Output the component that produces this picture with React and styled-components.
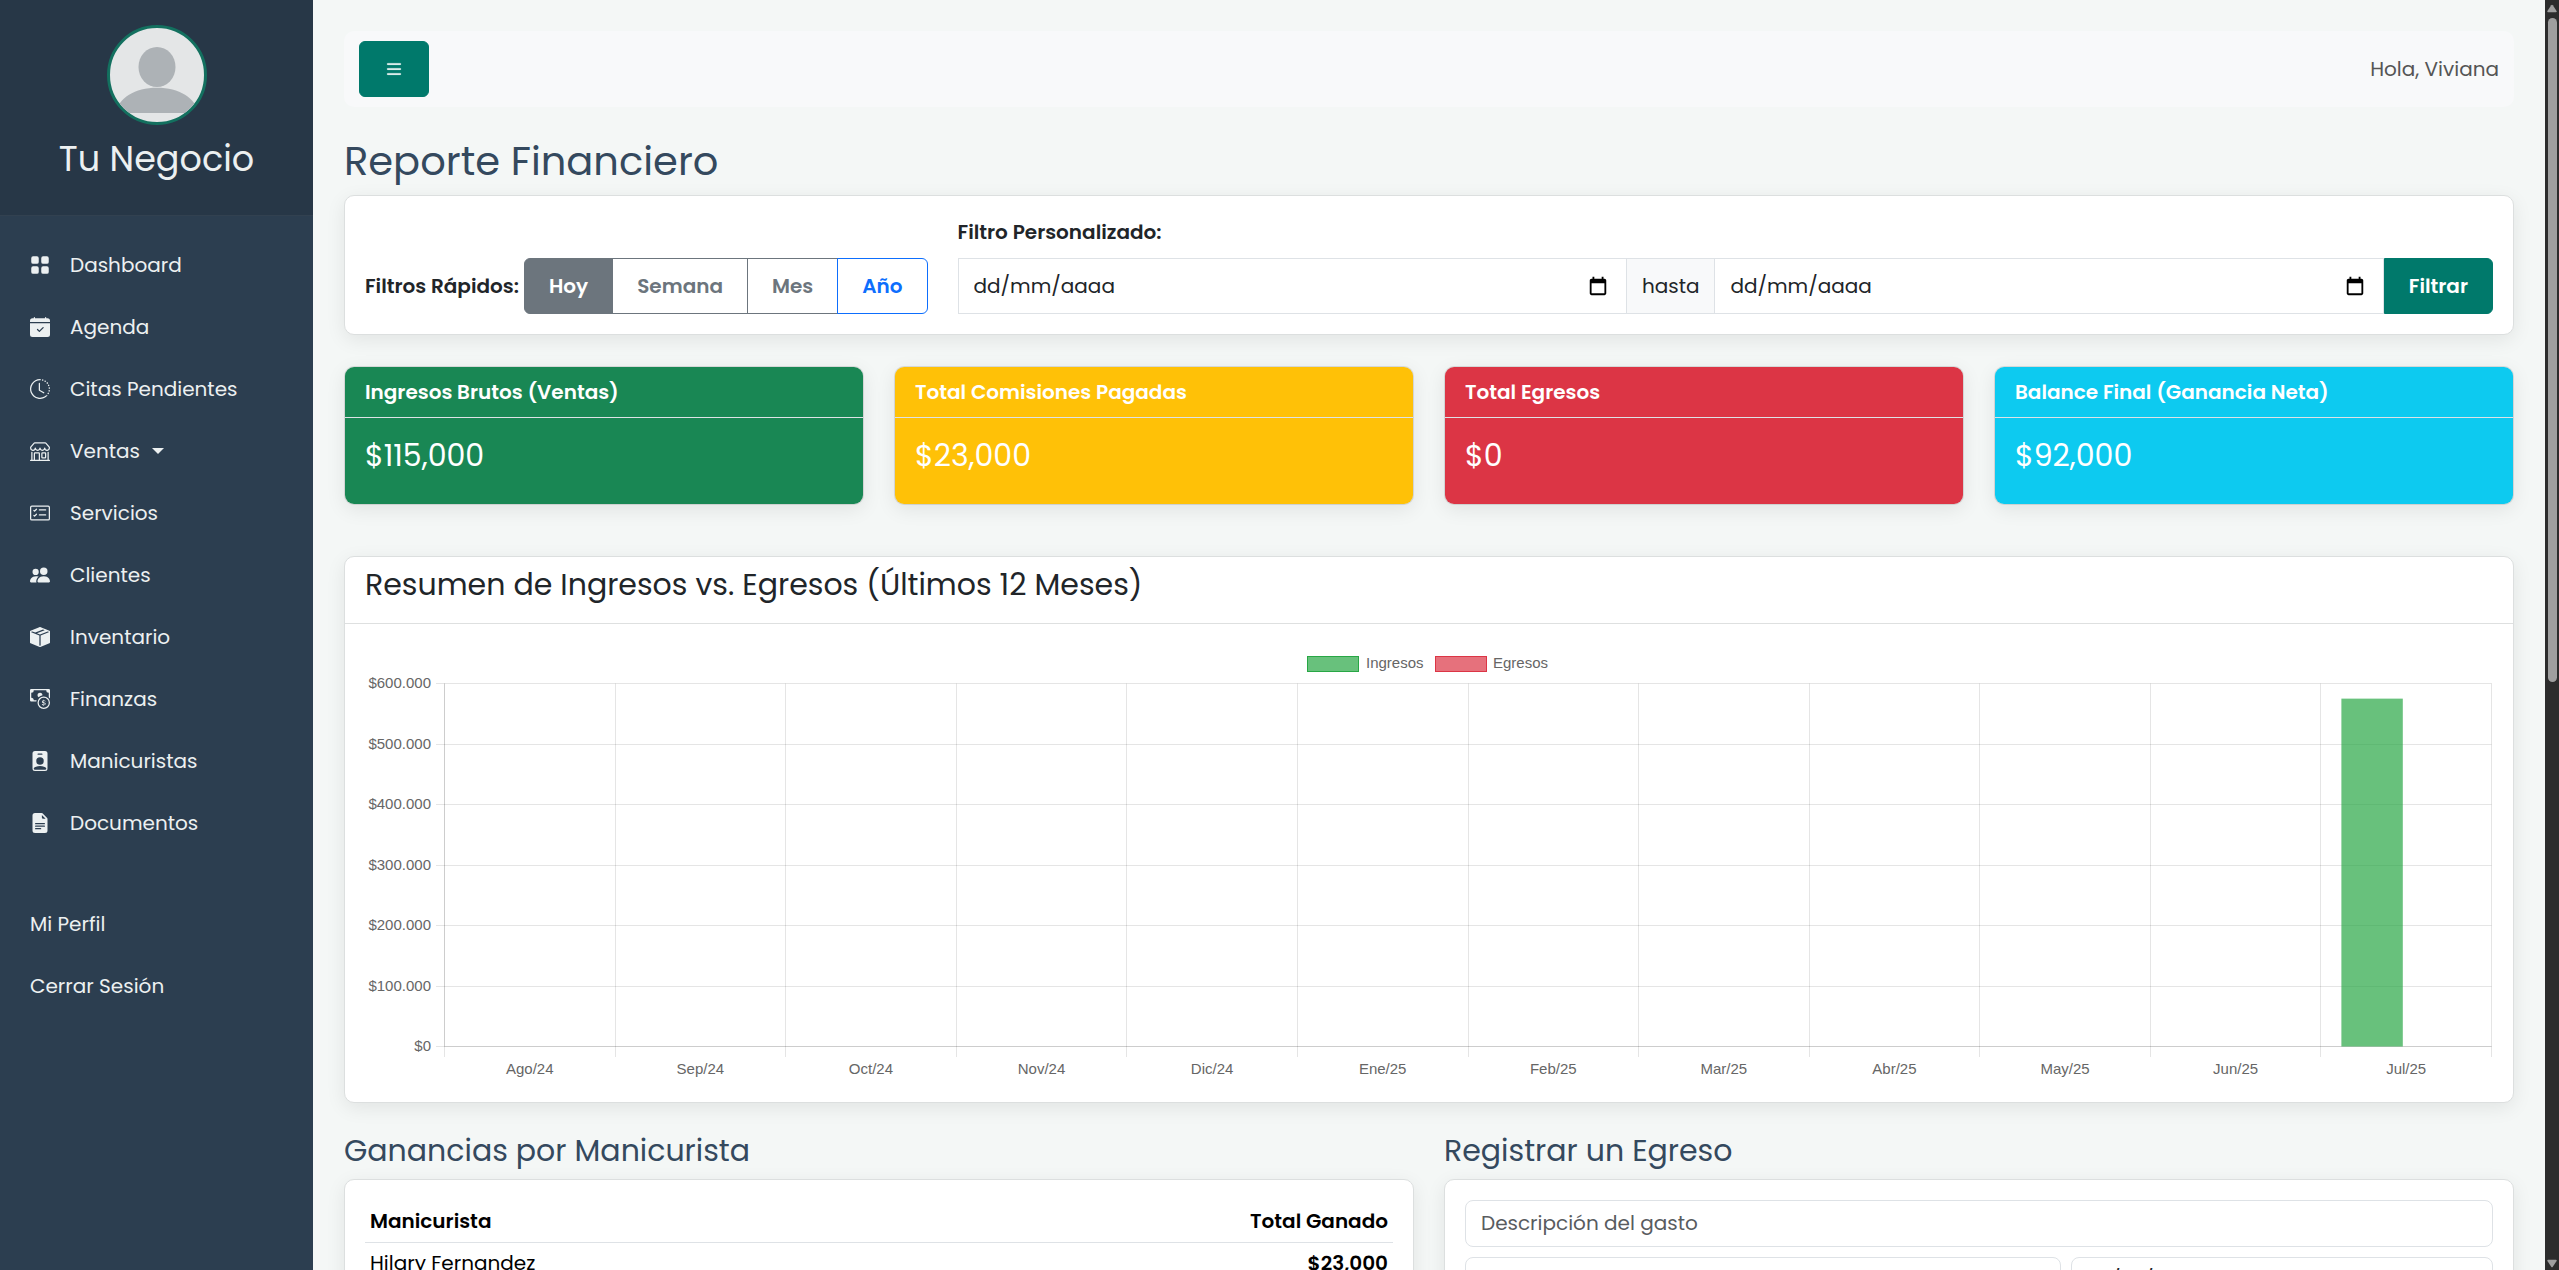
import { useState } from "react";
import styled, { createGlobalStyle } from "styled-components";
import {
  BsBoxSeamFill,
  BsCalendarCheckFill,
  BsCardChecklist,
  BsCashCoin,
  BsClockHistory,
  BsFileEarmarkTextFill,
  BsGridFill,
  BsList,
  BsPeopleFill,
  BsPersonBadgeFill,
  BsShop,
} from "react-icons/bs";

const GlobalStyle = createGlobalStyle`
  *, *::before, *::after {
    box-sizing: border-box;
  }

  body {
    margin: 0;
    background: #f4f7f6;
    color: #212529;
    font-family: Poppins, "Open Sans", sans-serif;
    font-size: 20px;
    line-height: 30px;
  }

  button, input {
    font: inherit;
  }
`;

const Page = styled.div`
  display: flex;
  height: 100vh;
  overflow: hidden;
`;

/* Sidebar */
const Sidebar = styled.aside`
  flex: 0 0 313px;
  background: #2c3e50;
  color: #ecf0f1;
`;

const SidebarHeader = styled.div`
  display: flex;
  flex-direction: column;
  align-items: center;
  padding: 25px 20px;
  background: rgba(0, 0, 0, 0.1);
  border-bottom: 1px solid rgba(255, 255, 255, 0.05);
`;

const Avatar = styled.svg`
  width: 100px;
  height: 100px;
  margin-bottom: 13px;
  border: 3px solid #13705f;
  border-radius: 50%;
  background: #e4e6e7;
`;

const BusinessName = styled.h3`
  margin: 0 0 10px;
  font-size: 35px;
  font-weight: 400;
  line-height: 42px;
`;

const Menu = styled.ul`
  margin: 0;
  padding: ${(props) => (props.$secondary ? "39px 0 0" : "18px 0 0")};
  list-style: none;
`;

const MenuLink = styled.a`
  display: flex;
  align-items: center;
  gap: 20px;
  padding: 16px 30px;
  color: inherit;
  text-decoration: none;

  &:hover {
    background: rgba(255, 255, 255, 0.08);
  }
`;

const Caret = styled.span`
  margin-left: -8px;
  border-top: 6px solid;
  border-right: 6px solid transparent;
  border-left: 6px solid transparent;
`;

/* Main column */
const Main = styled.main`
  flex: 1;
  min-width: 0;
  padding: 31px;
  overflow: hidden;
`;

const TopBar = styled.header`
  display: flex;
  align-items: center;
  justify-content: space-between;
  padding: 10px 15px;
  border-radius: 10px;
  background: #f8f9fa;
  color: #555;
`;

const Button = styled.button`
  display: inline-flex;
  align-items: center;
  padding: 12px 24px;
  border: 1px solid #00796b;
  border-radius: ${(props) => (props.$attached ? "0 6px 6px 0" : "6px")};
  background: #00796b;
  color: #fff;
  font-weight: 600;
  cursor: pointer;

  svg {
    height: 30px;
    stroke: currentColor;
    stroke-width: 0.4;
  }
`;

const PageTitle = styled.h1`
  margin: 30px 0 10px;
  color: #34495e;
  font-size: 40px;
  font-weight: 400;
  line-height: 48px;
`;

const SectionTitle = styled.h2`
  margin: 0 0 10px;
  color: #34495e;
  font-size: 30px;
  font-weight: 400;
  line-height: 36px;
`;

const Card = styled.section`
  border: 1px solid #dcdfdf;
  border-radius: 10px;
  background: #fff;
  box-shadow: 0 5px 19px rgba(0, 0, 0, 0.08);
`;

const CardBody = styled.div`
  padding: 20px;
`;

/* Filters */
const Filters = styled(CardBody)`
  display: flex;
  align-items: flex-end;
  gap: 30px;
`;

const QuickFilters = styled.div`
  display: flex;
  align-items: center;
  gap: 5px;
`;

const FilterLabel = styled.span`
  font-weight: 600;
`;

const ButtonGroup = styled.div`
  display: flex;
`;

const FilterButton = styled.button`
  padding: 12px 24px;
  margin-left: -1px;
  border: 1px solid ${(props) => props.$color};
  background: ${(props) => (props.$active ? props.$color : "transparent")};
  color: ${(props) => (props.$active ? "#fff" : props.$color)};
  font-weight: 600;
  cursor: pointer;

  &:first-child {
    margin-left: 0;
    border-radius: 6px 0 0 6px;
  }

  &:last-child {
    border-radius: 0 6px 6px 0;
  }
`;

const CustomFilter = styled.form`
  flex: 1;
`;

const CustomFilterTitle = styled.div`
  margin-bottom: 10px;
  font-weight: 600;
  line-height: 32px;
`;

const InputGroup = styled.div`
  display: flex;
`;

const DateBox = styled.div`
  display: flex;
  flex: 1;
  align-items: center;
  min-width: 0;
  padding: 0 17px 0 15px;
  border: 1px solid #dee2e6;
`;

const DateInput = styled.input`
  flex: 1;
  min-width: 0;
  padding: 0;
  border: 0;
  outline: 0;
  background: transparent;
  color: #212529;

  &::placeholder {
    color: #212529;
    opacity: 1;
  }
`;

const PickerButton = styled.button`
  display: flex;
  padding: 0;
  border: 0;
  background: none;
  color: #000;
  cursor: pointer;
`;

const InputAddon = styled.span`
  padding: 12px 15px;
  border: 1px solid #dee2e6;
  border-width: 1px 0;
  background: #f8f9fa;
`;

/* Stat cards */
const Stats = styled.div`
  display: grid;
  grid-template-columns: repeat(4, 1fr);
  gap: 30px;
  margin: 31px 0 51px;
`;

const StatCard = styled(Card)`
  border-color: rgba(0, 0, 0, 0.1);
  background: ${(props) => props.$color};
  background-clip: padding-box;
  color: #fff;
`;

const StatHeader = styled.div`
  padding: 10px 20px;
  border-bottom: 1px solid #dee2e6;
  font-weight: 600;
`;

const StatValue = styled.p`
  margin: 0;
  padding: 20px 20px 30px;
  font-size: 30px;
  line-height: 36px;
`;

/* Chart */
const CardHeader = styled.div`
  padding: 10px 20px;
  border-bottom: 1px solid #dee0e0;

  ${SectionTitle} {
    color: #212529;
  }
`;

const ChartSvg = styled.svg`
  display: block;
  width: 100%;
  height: auto;
  font-family: "Liberation Sans", Arial, sans-serif;
  font-size: 15px;
  fill: #666;
`;

/* Bottom row */
const Columns = styled.div`
  display: grid;
  grid-template-columns: 1fr 1fr;
  gap: 30px;
  margin-top: 30px;
`;

const Table = styled.table`
  width: 100%;
  border-collapse: collapse;
  color: #000;

  th,
  td {
    padding: 5px;
    border-bottom: 1px solid #dee2e6;
    text-align: left;
  }

  th {
    padding: 6px 5px;
    font-weight: 600;
  }

  th:last-child,
  td:last-child {
    text-align: right;
    font-weight: 600;
  }
`;

const ExpenseForm = styled.form`
  display: grid;
  grid-template-columns: 24fr 17fr;
  gap: 10px;
  padding: 20px;
`;

const TextInput = styled.input`
  grid-column: ${(props) => (props.$wide ? "1 / -1" : "auto")};
  width: 100%;
  padding: 7px 15px 8px;
  border: 1px solid #dee2e6;
  border-radius: 8px;
  background: #fff;
  color: #212529;

  &::placeholder {
    color: #595c5f;
    opacity: 1;
  }
`;

/* Page scroll bar */
const ScrollTrack = styled.div`
  display: flex;
  flex: 0 0 14px;
  flex-direction: column;
  align-items: center;
  padding: 4px 0 2px;
  background: #2c2c2c;
  color: #9f9f9f;
`;

const ScrollThumb = styled.div`
  flex: 0 0 52.5%;
  width: 9px;
  margin: 5px 0 auto;
  border-radius: 5px;
  background: #9f9f9f;
`;

const MENU = [
  { label: "Dashboard", icon: BsGridFill },
  { label: "Agenda", icon: BsCalendarCheckFill },
  { label: "Citas Pendientes", icon: BsClockHistory },
  { label: "Ventas", icon: BsShop, dropdown: true },
  { label: "Servicios", icon: BsCardChecklist },
  { label: "Clientes", icon: BsPeopleFill },
  { label: "Inventario", icon: BsBoxSeamFill },
  { label: "Finanzas", icon: BsCashCoin },
  { label: "Manicuristas", icon: BsPersonBadgeFill },
  { label: "Documentos", icon: BsFileEarmarkTextFill },
];

const QUICK_FILTERS = [
  { label: "Hoy", color: "#6c757d" },
  { label: "Semana", color: "#6c757d" },
  { label: "Mes", color: "#6c757d" },
  { label: "Año", color: "#0d6efd" },
];

const STATS = [
  { title: "Ingresos Brutos (Ventas)", value: "$115,000", color: "#198754" },
  { title: "Total Comisiones Pagadas", value: "$23,000", color: "#ffc107" },
  { title: "Total Egresos", value: "$0", color: "#dc3545" },
  { title: "Balance Final (Ganancia Neta)", value: "$92,000", color: "#0dcaf0" },
];

const MONTHS = [
  { label: "Ago/24", ingresos: 0 },
  { label: "Sep/24", ingresos: 0 },
  { label: "Oct/24", ingresos: 0 },
  { label: "Nov/24", ingresos: 0 },
  { label: "Dic/24", ingresos: 0 },
  { label: "Ene/25", ingresos: 0 },
  { label: "Feb/25", ingresos: 0 },
  { label: "Mar/25", ingresos: 0 },
  { label: "Abr/25", ingresos: 0 },
  { label: "May/25", ingresos: 0 },
  { label: "Jun/25", ingresos: 0 },
  { label: "Jul/25", ingresos: 575000 },
];

const Y_TICKS = [
  { value: 600000, label: "$600.000" },
  { value: 500000, label: "$500.000" },
  { value: 400000, label: "$400.000" },
  { value: 300000, label: "$300.000" },
  { value: 200000, label: "$200.000" },
  { value: 100000, label: "$100.000" },
  { value: 0, label: "$0" },
];

// plot area inside the 2128x438 chart
const PLOT = { left: 79.5, right: 2126.5, top: 39.5, bottom: 402.5, max: 600000 };

const Chart = () => {
  const step = (PLOT.right - PLOT.left) / MONTHS.length;
  const yOf = (value) => PLOT.bottom - (value / PLOT.max) * (PLOT.bottom - PLOT.top);
  const snap = (n) => Math.floor(n) + 0.5;

  return (
    <ChartSvg viewBox="0 0 2128 438" role="img" aria-label="Ingresos y egresos por mes">
      <rect x="942.5" y="12.5" width="51" height="15" fill="#28a745" fillOpacity="0.7" stroke="#28a745" />
      <text x="1001" y="24">Ingresos</text>
      <rect x="1070.5" y="12.5" width="51" height="15" fill="#dc3545" fillOpacity="0.7" stroke="#dc3545" />
      <text x="1128" y="24">Egresos</text>

      {Y_TICKS.map((tick) => {
        const y = snap(yOf(tick.value));
        return (
          <g key={tick.label}>
            <line x1="71" x2={PLOT.right} y1={y} y2={y} stroke="#000" strokeOpacity="0.1" />
            <text x="66" y={y + 4.5} textAnchor="end">
              {tick.label}
            </text>
          </g>
        );
      })}

      {[...MONTHS, null].map((_, i) => {
        const x = snap(PLOT.left + i * step);
        return <line key={i} x1={x} x2={x} y1={PLOT.top} y2="413" stroke="#000" strokeOpacity="0.1" />;
      })}
      <path
        d={`M${PLOT.left} ${PLOT.top}V${PLOT.bottom}H${PLOT.right}`}
        fill="none"
        stroke="#000"
        strokeOpacity="0.1"
      />

      {MONTHS.map((month, i) => {
        const x = PLOT.left + i * step;
        return (
          <g key={month.label}>
            <text x={x + step / 2} y="430" textAnchor="middle">
              {month.label}
            </text>
            {month.ingresos > 0 && (
              <rect
                x={x + step * 0.12}
                y={yOf(month.ingresos)}
                width={step * 0.36}
                height={PLOT.bottom - yOf(month.ingresos)}
                fill="#28a745"
                fillOpacity="0.7"
              />
            )}
          </g>
        );
      })}
    </ChartSvg>
  );
};

const CalendarIcon = () => (
  <svg width="22" height="22" viewBox="0 0 16 16" fill="currentColor" aria-hidden="true">
    <path d="M12.67 2.67H12V1.33h-1.33v1.34H5.33V1.33H4v1.34h-.67C2.6 2.67 2 3.27 2 4v9.33c0 .74.6 1.34 1.33 1.34h9.34c.73 0 1.33-.6 1.33-1.34V4c0-.73-.6-1.33-1.33-1.33zm0 10.66H3.33V6h9.34v7.33z" />
  </svg>
);

const DateField = ({ label }) => (
  <DateBox>
    <DateInput type="text" placeholder="dd/mm/aaaa" aria-label={label} />
    <PickerButton type="button" aria-label="Abrir calendario">
      <CalendarIcon />
    </PickerButton>
  </DateBox>
);

const App = () => {
  const [range, setRange] = useState("Hoy");

  return (
    <>
      <GlobalStyle />
      <Page>
        <Sidebar>
          <SidebarHeader>
            <Avatar viewBox="3 3 94 94" aria-hidden="true">
              <ellipse cx="50" cy="42" rx="18.5" ry="20" fill="#adb2b6" />
              <path d="M9 88C11 73 28 62.700 50 62.700S89 73 91 88z" fill="#adb2b6" />
            </Avatar>
            <BusinessName>Tu Negocio</BusinessName>
          </SidebarHeader>
          <nav>
            <Menu>
              {MENU.map(({ label, icon: Icon, dropdown }) => (
                <li key={label}>
                  <MenuLink href="#">
                    <Icon size={20} />
                    {label}
                    {dropdown && <Caret />}
                  </MenuLink>
                </li>
              ))}
            </Menu>
            <Menu $secondary>
              <li>
                <MenuLink href="#">Mi Perfil</MenuLink>
              </li>
              <li>
                <MenuLink href="#">Cerrar Sesión</MenuLink>
              </li>
            </Menu>
          </nav>
        </Sidebar>

        <Main>
          <TopBar>
            <Button type="button" aria-label="Menú">
              <BsList size={20} />
            </Button>
            <span>Hola, Viviana</span>
          </TopBar>

          <PageTitle>Reporte Financiero</PageTitle>

          <Card>
            <Filters>
              <QuickFilters>
                <FilterLabel>Filtros Rápidos:</FilterLabel>
                <ButtonGroup>
                  {QUICK_FILTERS.map(({ label, color }) => (
                    <FilterButton
                      key={label}
                      type="button"
                      $color={color}
                      $active={range === label}
                      onClick={() => setRange(label)}
                    >
                      {label}
                    </FilterButton>
                  ))}
                </ButtonGroup>
              </QuickFilters>
              <CustomFilter onSubmit={(e) => e.preventDefault()}>
                <CustomFilterTitle>Filtro Personalizado:</CustomFilterTitle>
                <InputGroup>
                  <DateField label="Desde" />
                  <InputAddon>hasta</InputAddon>
                  <DateField label="Hasta" />
                  <Button type="submit" $attached>
                    Filtrar
                  </Button>
                </InputGroup>
              </CustomFilter>
            </Filters>
          </Card>

          <Stats>
            {STATS.map((stat) => (
              <StatCard key={stat.title} $color={stat.color}>
                <StatHeader>{stat.title}</StatHeader>
                <StatValue>{stat.value}</StatValue>
              </StatCard>
            ))}
          </Stats>

          <Card>
            <CardHeader>
              <SectionTitle>Resumen de Ingresos vs. Egresos (Últimos 12 Meses)</SectionTitle>
            </CardHeader>
            <CardBody>
              <Chart />
            </CardBody>
          </Card>

          <Columns>
            <div>
              <SectionTitle>Ganancias por Manicurista</SectionTitle>
              <Card>
                <CardBody>
                  <Table>
                    <thead>
                      <tr>
                        <th>Manicurista</th>
                        <th>Total Ganado</th>
                      </tr>
                    </thead>
                    <tbody>
                      <tr>
                        <td>Hilary Fernandez</td>
                        <td>$23,000</td>
                      </tr>
                    </tbody>
                  </Table>
                </CardBody>
              </Card>
            </div>
            <div>
              <SectionTitle>Registrar un Egreso</SectionTitle>
              <Card>
                <ExpenseForm onSubmit={(e) => e.preventDefault()}>
                  <TextInput $wide type="text" placeholder="Descripción del gasto" aria-label="Descripción del gasto" />
                  <TextInput type="text" placeholder="Monto" aria-label="Monto" />
                  <TextInput type="text" defaultValue="20/07/2025" aria-label="Fecha" />
                </ExpenseForm>
              </Card>
            </div>
          </Columns>
        </Main>

        <ScrollTrack aria-hidden="true">
          <svg width="10" height="9" viewBox="0 0 10 9" fill="currentColor">
            <path d="M4.200 1.200q.8-1.100 1.600 0L9.600 7q.5 1.200-.8 1.200H1.200Q-.1 8.200.4 7z" />
          </svg>
          <ScrollThumb />
          <svg width="10" height="9" viewBox="0 0 10 9" fill="currentColor">
            <path d="M4.200 7.800q.8 1.100 1.600 0L9.600 2q.5-1.200-.8-1.200H1.200Q-.1.800.4 2z" />
          </svg>
        </ScrollTrack>
      </Page>
    </>
  );
};

export default App;
